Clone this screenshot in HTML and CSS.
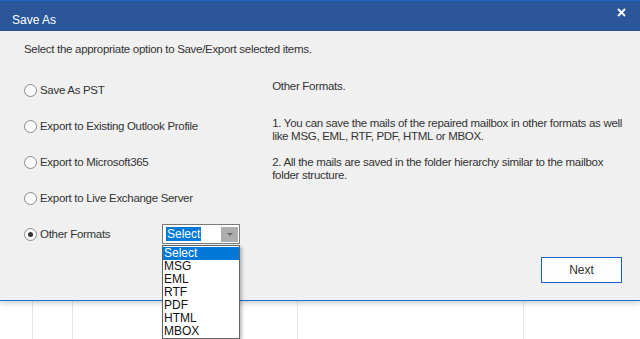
FILE: index.html
```html
<!DOCTYPE html>
<html lang="en">
<head>
<meta charset="utf-8">
<title>Save As</title>
<link rel="stylesheet" href="styles.css">
</head>
<body>
<div class="backdrop">
	<div class="col col-1"></div>
	<div class="col col-2"></div>
	<div class="col col-3"></div>
	<div class="col col-4"></div>
	<div class="col col-5"></div>
</div>

<div class="dialog">
	<div class="titlebar">
		<span class="title">Save As</span>
		<a href="#none" class="close" aria-label="Close">
			<svg width="9" height="9" viewBox="0 0 9 9"><path d="M1 1L8 8M8 1L1 8" stroke="#fff" stroke-width="1.8" fill="none"/></svg>
		</a>
	</div>
	<div class="dialog-body">
		<p class="intro">Select the appropriate option to Save/Export selected items.</p>
		<div class="options">
			<ul class="option-list">
				<li class="option"><span class="radio"></span>Save As PST</li>
				<li class="option"><span class="radio"></span>Export to Existing Outlook Profile</li>
				<li class="option"><span class="radio"></span>Export to Microsoft365</li>
				<li class="option"><span class="radio"></span>Export to Live Exchange Server</li>
				<li class="option">
					<span class="choice"><span class="radio is-checked"></span>Other Formats</span>
					<div class="combo">
						<span class="combo-value">Select</span>
						<span class="combo-arrow"></span>
					</div>
				</li>
			</ul>
			<div class="info">
				<p class="info-title">Other Formats.</p>
				<p class="info-text">1. You can save the mails of the repaired mailbox in other formats as well<br>like MSG, EML, RTF, PDF, HTML or MBOX.</p>
				<p class="info-text second">2. All the mails are saved in the folder hierarchy similar to the mailbox<br>folder structure.</p>
				<div class="actions">
					<button class="btn" type="button">Next</button>
				</div>
			</div>
		</div>
	</div>
</div>

<ul class="combo-list">
	<li class="is-selected">Select</li>
	<li>MSG</li>
	<li>EML</li>
	<li>RTF</li>
	<li>PDF</li>
	<li>HTML</li>
	<li>MBOX</li>
</ul>
</body>
</html>
```
FILE: styles.css
```css
* {
	margin: 0;
	padding: 0;
	box-sizing: border-box;
}
html, body {
	width: 640px;
	height: 339px;
	overflow: hidden;
	background: #fff;
}
body {
	position: relative;
	font-family: "Liberation Sans", Arial, sans-serif;
	font-size: 11.5px;
	letter-spacing: -0.3px;
	color: #333;
}
ul, li {
	list-style: none;
}

/* page behind the dialog */
.backdrop {
	position: absolute;
	left: 0;
	top: 0;
	width: 640px;
	height: 339px;
	display: flex;
}
.backdrop .col {
	height: 100%;
	border-left: 1px solid #e6e6e6;
}
.backdrop .col-1 { width: 32px; border-left: 0; }
.backdrop .col-2 { width: 40px; }
.backdrop .col-3 { width: 225px; }
.backdrop .col-4 { width: 226px; }
.backdrop .col-5 { flex: 1; }

/* dialog */
.dialog {
	position: relative;
	width: 640px;
	height: 301px;
	background: #f0f0f0;
	border-bottom: 1px solid #1570e0;
	box-shadow: 0 2px 6px rgba(0, 0, 0, 0.22);
}
.titlebar {
	display: flex;
	justify-content: space-between;
	align-items: flex-start;
	height: 31px;
	background: #2b579a;
	border-top: 1px solid #1c63c6;
	padding: 0 14px 0 12px;
}
.titlebar .title {
	margin-top: 11px;
	line-height: 16px;
	font-size: 12px;
	letter-spacing: 0;
	color: #fff;
}
.titlebar .close {
	display: block;
	margin-top: 7px;
	line-height: 0;
}
.dialog-body {
	padding: 10px 18px 0 24px;
}
.intro {
	line-height: 16px;
}
.options {
	display: flex;
	margin-top: 15px;
}
.option-list {
	width: 249px;
}
.option {
	display: flex;
	align-items: center;
	height: 36px;
	white-space: nowrap;
}
.choice {
	display: flex;
	align-items: center;
	width: 138px;
}
.radio {
	position: relative;
	display: inline-block;
	flex: none;
	width: 13px;
	height: 13px;
	margin-right: 3px;
	border: 1px solid #8a8a8a;
	border-radius: 50%;
	background: #fafafa;
}
.radio.is-checked:after {
	content: "";
	position: absolute;
	left: 3px;
	top: 3px;
	width: 5px;
	height: 5px;
	border-radius: 50%;
	background: #333;
}

/* combo box */
.combo {
	display: flex;
	align-items: center;
	justify-content: space-between;
	width: 78px;
	height: 20px;
	padding: 0 1px 0 3px;
	border: 1px solid #7a7a7a;
	background: #fff;
}
.combo-value {
	padding: 0 1px;
	line-height: 14px;
	font-size: 12px;
	letter-spacing: 0;
	background: #0078d7;
	color: #fff;
}
.combo-arrow {
	position: relative;
	width: 17px;
	height: 15px;
	background: #adadad;
}
.combo-arrow:after {
	content: "";
	position: absolute;
	left: 6px;
	top: 6px;
	border-left: 3px solid transparent;
	border-right: 3px solid transparent;
	border-top: 3px solid #6a6a6a;
}
.combo-list {
	position: absolute;
	left: 162px;
	top: 245px;
	width: 78px;
	padding: 1px 0 0;
	border: 1px solid #646464;
	background: #fff;
	box-shadow: 2px 2px 3px rgba(0, 0, 0, 0.25);
	font-size: 12px;
	letter-spacing: 0;
}
.combo-list li {
	height: 13px;
	padding-left: 1px;
	line-height: 13px;
	color: #111;
}
.combo-list li.is-selected {
	background: #0078d7;
	color: #fff;
}

/* right info column */
.info {
	flex: 1;
	line-height: 13px;
	white-space: nowrap;
}
.info-title {
	margin-top: 8px;
}
.info-text {
	margin-top: 24px;
}
.info-text.second {
	margin-top: 13px;
}
.actions {
	display: flex;
	justify-content: flex-end;
	margin-top: 75px;
}
.btn {
	width: 81px;
	height: 26px;
	border: 1px solid #1b62c4;
	background: #fdfdfd;
	font-family: inherit;
	font-size: 12px;
	color: #333;
}
```
